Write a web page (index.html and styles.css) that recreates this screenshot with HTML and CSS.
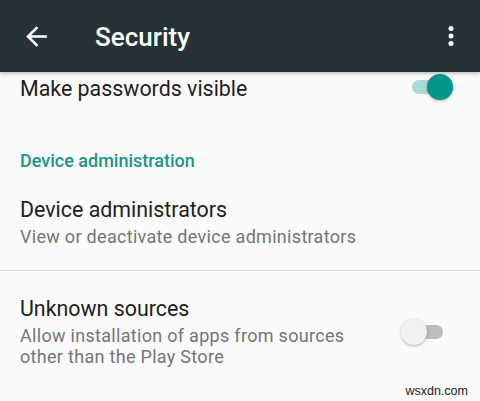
FILE: index.html
```html
<!DOCTYPE html>
<html>
<head>
<meta charset="utf-8">
<link rel="stylesheet" href="styles.css">
</head>
<body>
<div class="screen">
  <header class="appbar">
    <svg class="appbar-icon back" viewBox="0 0 24 24"><path d="M20 11H7.83l5.59-5.59L12 4l-8 8 8 8 1.41-1.41L7.83 13H20v-2z" fill="#fff"/></svg>
    <h1 class="appbar-title">Security</h1>
    <svg class="appbar-icon more" viewBox="0 0 24 24"><circle cx="12" cy="6" r="2" fill="#fff"/><circle cx="12" cy="12" r="2" fill="#fff"/><circle cx="12" cy="18" r="2" fill="#fff"/></svg>
  </header>
  <main class="content">
    <div class="pref pref-first">
      <div class="pref-text">
        <div class="pref-title">Make passwords visible</div>
      </div>
      <div class="switch switch-on switch-first"><span class="switch-track"></span><span class="switch-thumb"></span></div>
    </div>
    <div class="category">Device administration</div>
    <div class="pref pref-divided">
      <div class="pref-text">
        <div class="pref-title">Device administrators</div>
        <div class="pref-summary">View or deactivate device administrators</div>
      </div>
    </div>
    <div class="pref">
      <div class="pref-text">
        <div class="pref-title">Unknown sources</div>
        <div class="pref-summary">Allow installation of apps from sources<br>other than the Play Store</div>
      </div>
      <div class="switch switch-off"><span class="switch-track"></span><span class="switch-thumb"></span></div>
    </div>
  </main>
  <div class="watermark">wsxdn.com</div>
</div>
</body>
</html>
```
FILE: styles.css
```css
html, body {
  margin: 0;
  padding: 0;
}
body {
  background: #fafafa;
  font-family: Roboto, "Noto Sans", sans-serif;
}
.screen {
  position: relative;
  width: 480px;
  height: 401px;
  overflow: hidden;
  background: #fafafa;
}
.appbar {
  position: relative;
  z-index: 2;
  height: 72px;
  box-sizing: border-box;
  background: #263238;
  display: flex;
  align-items: center;
  padding: 0 14px 0 21px;
  box-shadow: 0 1px 4px rgba(0,0,0,0.3);
}
.appbar-icon {
  width: 31px;
  height: 31px;
  flex: none;
}
.appbar-title {
  flex: 1;
  margin: 0 0 0 43px;
  padding-top: 2px;
  color: #fff;
  font-size: 26px;
  font-weight: 500;
  line-height: 30px;
}
.more {
  width: 30px;
  height: 30px;
}
.content {
  padding-top: 2px;
}
.pref {
  display: flex;
  align-items: center;
  padding: 24px 0 0 20px;
}
.pref-first {
  padding-top: 0;
}
.pref-divided {
  padding-top: 23px;
  padding-bottom: 23px;
  border-bottom: 1px solid #dcdcdc;
}
.pref-text {
  flex: 1;
}
.pref-title {
  font-size: 21.4px;
  line-height: 28px;
  color: #212121;
}
.pref-summary {
  margin-top: 2px;
  font-size: 18px;
  letter-spacing: 0.3px;
  line-height: 21px;
  color: #757575;
}
.category {
  margin-top: 45px;
  padding-left: 20px;
  font-size: 18px;
  font-weight: 500;
  line-height: 24px;
  color: #1a9686;
}
.switch {
  position: relative;
  width: 48px;
  height: 26px;
  flex: none;
}
.switch-track {
  position: absolute;
  top: 6px;
  width: 38px;
  height: 14px;
  border-radius: 7px;
}
.switch-thumb {
  position: absolute;
  top: 0;
  width: 26px;
  height: 26px;
  border-radius: 50%;
  box-shadow: 0 1px 3px rgba(0,0,0,0.3);
}
.switch-on {
  margin-right: 27px;
}
.switch-first {
  margin-bottom: 4px;
}
.switch-on .switch-track {
  left: 7px;
  background: #a9dad4;
}
.switch-on .switch-thumb {
  right: 0;
  background: #009688;
}
.switch-off {
  margin-right: 31px;
  margin-top: 2px;
}
.switch-off .switch-track {
  left: 4px;
  background: #bdbdbd;
}
.switch-off .switch-thumb {
  left: 0;
  background: #f1f1f1;
}
.watermark {
  position: absolute;
  right: 12px;
  bottom: 3px;
  font-family: "Liberation Sans", Arial, sans-serif;
  font-size: 12.5px;
  color: #222;
}
```
